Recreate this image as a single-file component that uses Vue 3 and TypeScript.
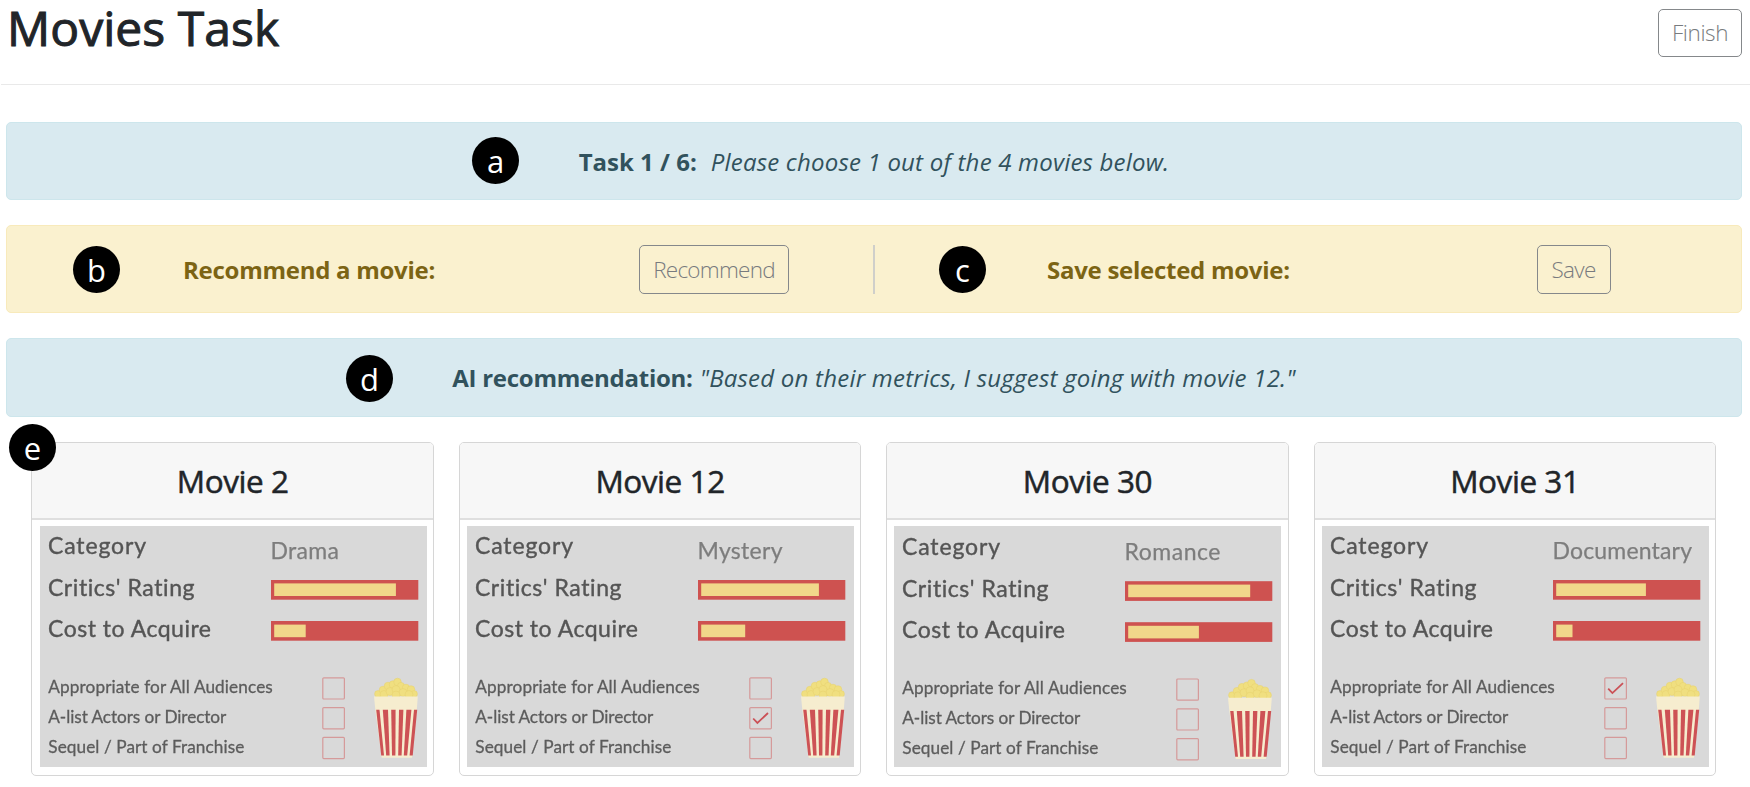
<script setup lang="ts">
interface Movie {
  id: number
  category: string
  categoryWidth: number
  rating: number
  cost: number
  flags: boolean[]
  shift: number
}

const movies: Movie[] = [
  { id: 2, category: 'Drama', categoryWidth: 68.5, rating: 121.7, cost: 31.5, flags: [false, false, false], shift: 0 },
  { id: 12, category: 'Mystery', categoryWidth: 85, rating: 117.7, cost: 44, flags: [false, true, false], shift: 0 },
  { id: 30, category: 'Romance', categoryWidth: 96, rating: 122, cost: 70.7, flags: [false, false, false], shift: 1.2 },
  { id: 31, category: 'Documentary', categoryWidth: 139.5, rating: 89.7, cost: 16.3, flags: [true, false, false], shift: 0 },
]

const boxTops = [151.8, 181.6, 211.4]

const stripes = [
  '336.2,183.7 339.5,183.7 344,229.5 341.2,229.5',
  '342.8,183.7 348,183.7 349.6,229.5 346.2,229.5',
  '351.2,183.7 355.6,183.7 355.4,229.5 352,229.5',
  '359,183.7 363.4,183.7 361.6,229.5 358.2,229.5',
  '366.4,183.7 371.4,183.7 367.2,229.5 363.8,229.5',
  '374,183.7 377.2,183.7 372.7,229.5 369.6,229.5',
]

const kernels = [
  [338, 168, 3.4], [343, 164, 3.8], [348, 160, 3.8], [353, 158.5, 3.8], [357.5, 156, 3.8],
  [361, 160, 3.6], [366, 162, 3.8], [371, 163.5, 3.8], [374, 168, 3.4], [344, 168.5, 4],
  [350, 165.5, 4], [356, 163.5, 4], [363, 166.5, 4], [369, 168.5, 4], [356, 169, 4],
]
</script>

<template>
  <main class="page">
    <header class="top">
      <h1>Movies Task</h1>
      <button class="btn finish"><span>Finish</span></button>
    </header>

    <section class="banner info task">
      <span class="badge badge-a"><i>a</i></span>
      <b class="task-label">Task 1 / 6:</b>
      <em class="task-text">Please choose 1 out of the 4 movies below.</em>
    </section>

    <section class="banner actions">
      <div class="half first">
        <span class="badge badge-b"><i>b</i></span>
        <b class="rec-label">Recommend a movie:</b>
        <button class="btn recommend"><span>Recommend</span></button>
      </div>
      <div class="half second">
        <span class="badge badge-c"><i>c</i></span>
        <b class="save-label">Save selected movie:</b>
        <button class="btn save"><span>Save</span></button>
      </div>
    </section>

    <section class="banner info advice">
      <span class="badge badge-d"><i>d</i></span>
      <b class="ai-label">AI recommendation:</b>
      <em class="ai-text">"Based on their metrics, I suggest going with movie 12."</em>
    </section>

    <section class="cards">
      <span class="badge badge-e"><i>e</i></span>
      <article v-for="m in movies" :key="m.id" class="card">
        <h2>Movie {{ m.id }}</h2>
        <div class="frame">
          <svg class="poster" viewBox="0 0 387 241" width="387" height="241">
            <g :transform="`translate(0 ${m.shift})`">
              <g class="label">
                <text x="8" y="28.3" textLength="98">Category</text>
                <text x="8" y="69.5" textLength="146.5">Critics' Rating</text>
                <text x="8" y="111.1" textLength="163">Cost to Acquire</text>
              </g>
              <text class="category" x="230.5" y="32.8" :textLength="m.categoryWidth">{{ m.category }}</text>

              <rect class="bar" x="231" y="54" width="147.3" height="19.7" />
              <rect class="fill" x="234.2" y="57.4" :width="m.rating" height="12.6" />
              <rect class="bar" x="231" y="95" width="147.3" height="19.7" />
              <rect class="fill" x="234.2" y="98.6" :width="m.cost" height="12.6" />

              <g class="feature">
                <text x="8.3" y="167.3" textLength="224.5">Appropriate for All Audiences</text>
                <text x="8.3" y="196.8" textLength="178">A-list Actors or Director</text>
                <text x="8.3" y="226.8" textLength="196">Sequel / Part of Franchise</text>
              </g>

              <g v-for="(on, i) in m.flags" :key="i" :transform="`translate(282.8 ${boxTops[i]})`">
                <rect class="box" x="0" y="0" width="21.6" height="21.2" rx="1" />
                <path v-if="on" class="tick" d="M3.4 10.9L7.6 15.3L18.2 5.4" />
              </g>

              <circle v-for="(k, i) in kernels" :key="i" class="kernel" :cx="k[0]" :cy="k[1]" :r="k[2]" />
              <path class="tub" d="M334 170.5H377.8L376.8 183.5L372 231.7H341.7L335.3 183.5Z" />
              <polygon v-for="s in stripes" :key="s" class="stripe" :points="s" />
            </g>
          </svg>
        </div>
      </article>
    </section>
  </main>
</template>

<style>
body {
  margin: 0;
  background: #fff;
}
</style>

<style scoped>
.page {
  box-sizing: border-box;
  width: 1750px;
  height: 787px;
  font-family: "Open Sans", "Noto Sans", sans-serif;
  color: #212529;
}

.top {
  display: flex;
  justify-content: space-between;
  align-items: flex-start;
  box-sizing: border-box;
  height: 85px;
  margin-left: 1px;
  padding: 0 8px 0 6px;
  border-bottom: 1px solid #e9e9e9;
}

h1 {
  margin: 0;
  font-size: 48px;
  line-height: 56px;
  font-weight: 400;
  letter-spacing: 0.05px;
  -webkit-text-stroke: 1px currentColor;
  white-space: nowrap;
}

.btn {
  display: flex;
  justify-content: center;
  align-items: center;
  box-sizing: border-box;
  height: 48px;
  padding: 0;
  border: 1.5px solid #85888b;
  border-radius: 5px;
  background: transparent;
  color: #787b7e;
  font: 300 22.5px/30px "Open Sans", "Noto Sans", sans-serif;
  white-space: nowrap;
}

.finish { width: 84px; margin-top: 9px; letter-spacing: -0.4px; }
.recommend { width: 150px; height: 49px; letter-spacing: -0.75px; }
.save { width: 74px; height: 49px; letter-spacing: -0.7px; }
.half .btn span { padding-top: 1px; }

.banner {
  position: relative;
  display: flex;
  align-items: center;
  box-sizing: border-box;
  width: 1736px;
  margin-left: 6px;
  border: 1px solid;
  border-radius: 5px;
  font-size: 24px;
  line-height: 32px;
  white-space: nowrap;
}

.info {
  justify-content: center;
  border-color: #cde6ec;
  background: #d9eaf0;
  color: #31525d;
}

.task { height: 78px; margin-top: 37px; padding-top: 2px; }
.advice { height: 79px; margin-top: 25px; }

.task-label { letter-spacing: 0; margin-right: 14px; }
.task-text { letter-spacing: 0.2px; }
.ai-label { letter-spacing: -0.25px; margin-right: 7px; }
.ai-text { letter-spacing: 0.22px; }

b { font-weight: 700; }

.actions {
  height: 88px;
  margin-top: 25px;
  border-color: #f8eabb;
  background: #faf1cf;
  color: #7c6414;
}

.half {
  position: relative;
  display: grid;
  align-items: center;
  height: 49px;
}

.first {
  grid-template-columns: 456px 150px;
  width: 690px;
  padding-left: 176px;
  border-right: 2px solid #cfcfca;
}

.second {
  grid-template-columns: 489.5px 74px;
  padding-left: 172px;
}

.rec-label, .save-label { letter-spacing: -0.27px; padding-top: 1px; }

.badge {
  position: absolute;
  z-index: 1;
  width: 47px;
  height: 47px;
  border-radius: 50%;
  background: #000;
  color: #fff;
  font-size: 31px;
  line-height: 48px;
  text-align: center;
}

.badge i { font-style: normal; }

.badge-a { left: 465px; top: 14px; }
.badge-b { left: 66px; top: 1px; }
.badge-c { left: 64px; top: 1px; }
.badge-d { left: 339px; top: 16px; }
.badge-e { left: 9px; top: -18px; }

.cards {
  position: relative;
  display: flex;
  gap: 24.9px;
  margin-top: 25px;
  padding-left: 31.45px;
}

.card {
  box-sizing: border-box;
  width: 402.5px;
  height: 333.5px;
  border: 1px solid #d6d6d6;
  border-radius: 5px;
  overflow: hidden;
  background: #fff;
}

h2 {
  box-sizing: border-box;
  height: 77px;
  margin: 0;
  border-bottom: 2px solid #dfdfdf;
  background: #f7f7f7;
  font-size: 31.5px;
  line-height: 76px;
  font-weight: 400;
  letter-spacing: -0.45px;
  -webkit-text-stroke: 0.5px currentColor;
  text-align: center;
}

.frame { padding: 6px 0 0 7.1px; }

.poster {
  display: block;
  background: #d9d9d9;
  font-family: Lato, "Open Sans", sans-serif;
  font-variant-ligatures: none;
}

.poster > g { filter: blur(0.35px); }

.label { font-size: 23px; fill: #555; stroke: #555; stroke-width: 0.4; }
.category { font-size: 23px; fill: #7d7d7d; stroke: #7d7d7d; stroke-width: 0.25; }
.feature { font-size: 17.2px; fill: #5c5c5c; stroke: #5c5c5c; stroke-width: 0.3; }
.bar { fill: #ce5250; }
.fill { fill: #f1d78a; }
.box { fill: none; stroke: #d59a9a; stroke-width: 1.2; }
.tick { fill: none; stroke: #cb5157; stroke-width: 1.8; }
.kernel { fill: #f0df80; stroke: #e6d06c; stroke-width: 0.5; }
.tub { fill: #f6edcf; }
.stripe { fill: #cd5255; }
</style>
